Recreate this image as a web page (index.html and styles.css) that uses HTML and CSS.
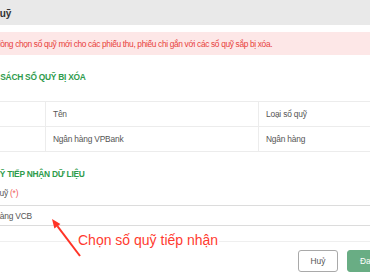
FILE: index.html
```html
<!DOCTYPE html>
<html lang="vi">
<head>
<meta charset="utf-8">
<link rel="stylesheet" href="styles.css">
</head>
<body>
<div class="stage">
  <div class="modal">
    <div class="modal-header"><span class="modal-title">Xóa sổ quỹ</span></div>
    <div class="modal-body">
      <div class="alert">Vui lòng chọn sổ quỹ mới cho các phiếu thu, phiếu chi gắn với các sổ quỹ sắp bị xóa.</div>
      <div class="section-title first">DANH SÁCH SỔ QUỸ BỊ XÓA</div>
      <table class="grid">
        <thead>
          <tr><th class="c1">STT</th><th class="c2">Tên</th><th class="c3">Loại sổ quỹ</th></tr>
        </thead>
        <tbody>
          <tr><td class="c1">1</td><td class="c2">Ngân hàng VPBank</td><td class="c3">Ngân hàng</td></tr>
        </tbody>
      </table>
      <div class="section-title second">SỔ QUỸ TIẾP NHẬN DỮ LIỆU</div>
      <div class="field-label">Sổ quỹ <span class="req">(*)</span></div>
      <div class="select">Ngân hàng VCB</div>
    </div>
    <div class="modal-footer">
      <button class="btn btn-cancel">Huỷ</button>
      <button class="btn btn-ok">Đang xóa</button>
    </div>
  </div>
  <svg class="arrow" width="370" height="280" viewBox="0 0 370 280">
    <line x1="80" y1="256" x2="57.4" y2="226.2" stroke="#ff3326" stroke-width="2"/>
    <polygon points="52,219 60.4,224 54.4,228.5" fill="#ff3326"/>
  </svg>
  <div class="note">Chọn số quỹ tiếp nhận</div>
</div>
</body>
</html>
```
FILE: styles.css
```css
html, body {
  margin: 0;
  padding: 0;
  background: #ffffff;
}
body {
  width: 370px;
  height: 280px;
  overflow: hidden;
  font-family: "Liberation Sans", Arial, sans-serif;
}
.stage {
  position: relative;
  width: 370px;
  height: 280px;
  overflow: hidden;
}
.modal {
  margin-left: -56px;
  width: 479px;
  background: #fff;
}
.modal-header {
  height: 25px;
  background: #e9e9e9;
  display: flex;
  align-items: center;
  padding-left: 14px;
  padding-top: 1px;
  box-sizing: border-box;
}
.modal-title {
  font-size: 10px;
  font-weight: bold;
  color: #333;
}
.modal-body {
  padding: 7px 30px 0 30px;
}
.alert {
  height: 23px;
  line-height: 24px;
  background: #fde7e7;
  color: #e8413c;
  font-size: 8.4px;
  letter-spacing: -0.35px;
  padding-left: 12px;
  white-space: nowrap;
}
.section-title {
  font-size: 8.4px;
  font-weight: bold;
  color: #2e9b4b;
  line-height: 12px;
  letter-spacing: -0.25px;
  white-space: nowrap;
}
.section-title.first {
  margin-top: 16px;
  margin-left: 1px;
}
.section-title.second {
  margin-top: 16px;
  margin-left: 0;
}
.grid {
  margin-top: 18px;
  border-collapse: collapse;
  width: 100%;
  font-size: 8.4px;
  letter-spacing: -0.2px;
  color: #555;
}
.grid th, .grid td {
  height: 24px;
  padding: 0 0 0 7px;
  text-align: left;
  font-weight: normal;
  border-top: 1px solid #ececec;
  border-bottom: 1px solid #ececec;
  white-space: nowrap;
}
.grid .c1 { width: 64px; }
.grid .c2 { width: 205px; border-left: 1px solid #ececec; }
.grid .c3 { border-left: 1px solid #ececec; }
.field-label {
  margin-top: 7px;
  padding-left: 9px;
  font-size: 8.4px;
  letter-spacing: -0.2px;
  line-height: 12px;
  color: #555;
}
.req {
  color: #f05a5a;
}
.select {
  margin-top: 6px;
  margin-left: -9px;
  padding-left: 8px;
  height: 19px;
  line-height: 20px;
  border: 1px solid #dcdcdc;
  font-size: 8.4px;
  letter-spacing: -0.2px;
  color: #555;
}
.modal-footer {
  margin-top: 15px;
  border-top: 1px solid #efefef;
  padding: 8px 14px 8px 0;
  display: flex;
  justify-content: flex-end;
  gap: 9px;
}
.btn {
  height: 22px;
  font-family: "Liberation Sans", Arial, sans-serif;
  font-size: 8.4px;
  border-radius: 3px;
  padding: 0;
  box-sizing: border-box;
}
.btn-cancel {
  width: 40px;
  background: #fff;
  border: 1px solid #a9a9a9;
  color: #555;
}
.btn-ok {
  width: 62px;
  background: #69ad84;
  border: 1px solid #69ad84;
  color: #fff;
  text-align: left;
  padding-left: 12px;
}
.arrow {
  position: absolute;
  left: 0;
  top: 0;
  pointer-events: none;
}
.note {
  position: absolute;
  left: 77px;
  top: 231px;
  font-size: 14px;
  line-height: 18px;
  color: #ff3b30;
  background: #fff;
  padding: 0 1px;
  white-space: nowrap;
}
```
